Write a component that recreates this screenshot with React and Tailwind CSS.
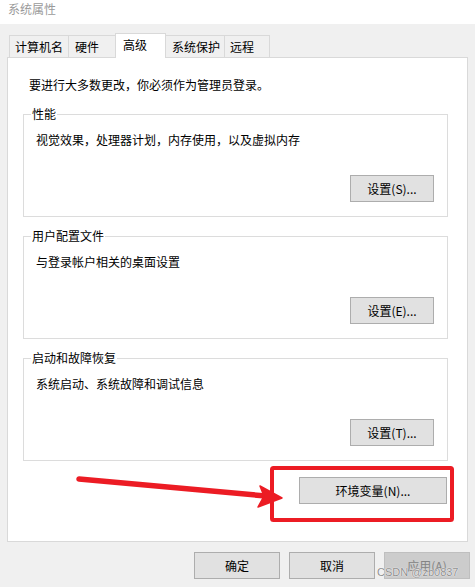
import React from 'react';

const font = { fontFamily: '"Noto Sans CJK SC", "Liberation Sans", sans-serif' };

const Button = ({ children, className = '', disabled = false }) => (
  <button
    disabled={disabled}
    className={`${
      disabled
        ? 'bg-[#cccccc] border-[#bfbfbf] text-[#838383]'
        : 'bg-[#e1e1e1] border-[#adadad] text-black'
    } h-[27px] border text-[12px] leading-[16px] flex items-center justify-center ${className}`}
  >
    {children}
  </button>
);

const Group = ({ title, text, action }) => (
  <div className="relative ml-[15px] w-[425px] h-[103px] border border-[#dcdcdc] flex flex-col">
    {/* legend sits on the top border */}
    <span className="absolute -top-[9px] left-[7px] bg-white px-[1px] text-[12px] leading-[16px]">
      {title}
    </span>
    <p className="mt-[17px] ml-[12px] text-[12px] leading-[16px]">{text}</p>
    <div className="mt-auto mb-[14px] mr-[13px] flex justify-end">
      <Button className="w-[84px]">{action}</Button>
    </div>
  </div>
);

const tabs = [
  { label: '计算机名', cls: 'w-[59px] pl-[5px] border-l' },
  { label: '硬件', cls: 'w-[47px] pl-[6px] border-l' },
  { label: '高级', active: true },
  { label: '系统保护', cls: 'w-[58px] pl-[6px]' },
  { label: '远程', cls: 'w-[46px] pl-[5px] border-l border-r' },
];

export default function App() {
  return (
    <div className="relative w-[475px] h-[587px] bg-[#f0f0f0] text-black overflow-hidden" style={font}>
      {/* title bar */}
      <div className="h-[24px] bg-white pl-[8px] pt-[1px] text-[12px] leading-[16px] text-[#9a9a9a]">
        系统属性
      </div>

      {/* tabs */}
      <div className="relative z-10 mt-[9px] h-[25px] pl-[9px] flex items-end">
        {tabs.map((t) =>
          t.active ? (
            <div
              key={t.label}
              className="w-[51px] h-[25px] pl-[7px] pt-[3px] bg-white border-l border-t border-r border-[#d9d9d9] text-[12px] leading-[16px]"
            >
              {t.label}
            </div>
          ) : (
            <div
              key={t.label}
              className={`${t.cls} h-[22px] mb-px flex items-center border-t border-[#d9d9d9] bg-[#f0f0f0] text-[12px] leading-[16px]`}
            >
              {t.label}
            </div>
          )
        )}
      </div>

      {/* tab panel */}
      <div className="-mt-px ml-[7px] w-[461px] h-[485px] bg-white border border-[#d9d9d9] flex flex-col">
        <p className="mt-[19px] ml-[21px] text-[12px] leading-[16px]">
          要进行大多数更改，你必须作为管理员登录。
        </p>
        <div className="mt-[21px] flex flex-col gap-[19px]">
          <Group title="性能" text="视觉效果，处理器计划，内存使用，以及虚拟内存" action="设置(S)..." />
          <Group title="用户配置文件" text="与登录帐户相关的桌面设置" action="设置(E)..." />
          <Group title="启动和故障恢复" text="系统启动、系统故障和调试信息" action="设置(T)..." />
        </div>
        <div className="mt-[16px] mr-[20px] flex justify-end">
          <Button className="w-[148px]">环境变量(N)...</Button>
        </div>
      </div>

      {/* dialog buttons */}
      <div className="mt-[10px] pr-[5px] flex justify-end gap-[9px]">
        <Button className="w-[86px]">确定</Button>
        <Button className="w-[86px]">取消</Button>
        <Button className="w-[86px]" disabled>应用(A)</Button>
      </div>

      {/* red annotation: arrow + box */}
      <svg className="absolute inset-0 pointer-events-none" width="475" height="587" viewBox="0 0 475 587">
        <line x1="79" y1="479" x2="266" y2="496" stroke="#ec1c24" strokeWidth="5.5" strokeLinecap="round" />
        <path d="M282 498 L258 507 L264 496 L260 486 Z" fill="#ec1c24" stroke="#ec1c24" strokeWidth="1.5" strokeLinejoin="round" />
        <rect x="272" y="468" width="180" height="52" rx="1.5" fill="none" stroke="#ec1c24" strokeWidth="4" />
      </svg>

      {/* watermark */}
      <span
        className="absolute left-[377px] top-[565px] text-[11px] leading-[14px] text-[#8f8f8f]"
        style={{ fontFamily: '"Liberation Sans", Arial, sans-serif', textShadow: '0 0 1px #fff, 0 0 1px #fff' }}
      >
        CSDN @zb0837
      </span>
    </div>
  );
}
